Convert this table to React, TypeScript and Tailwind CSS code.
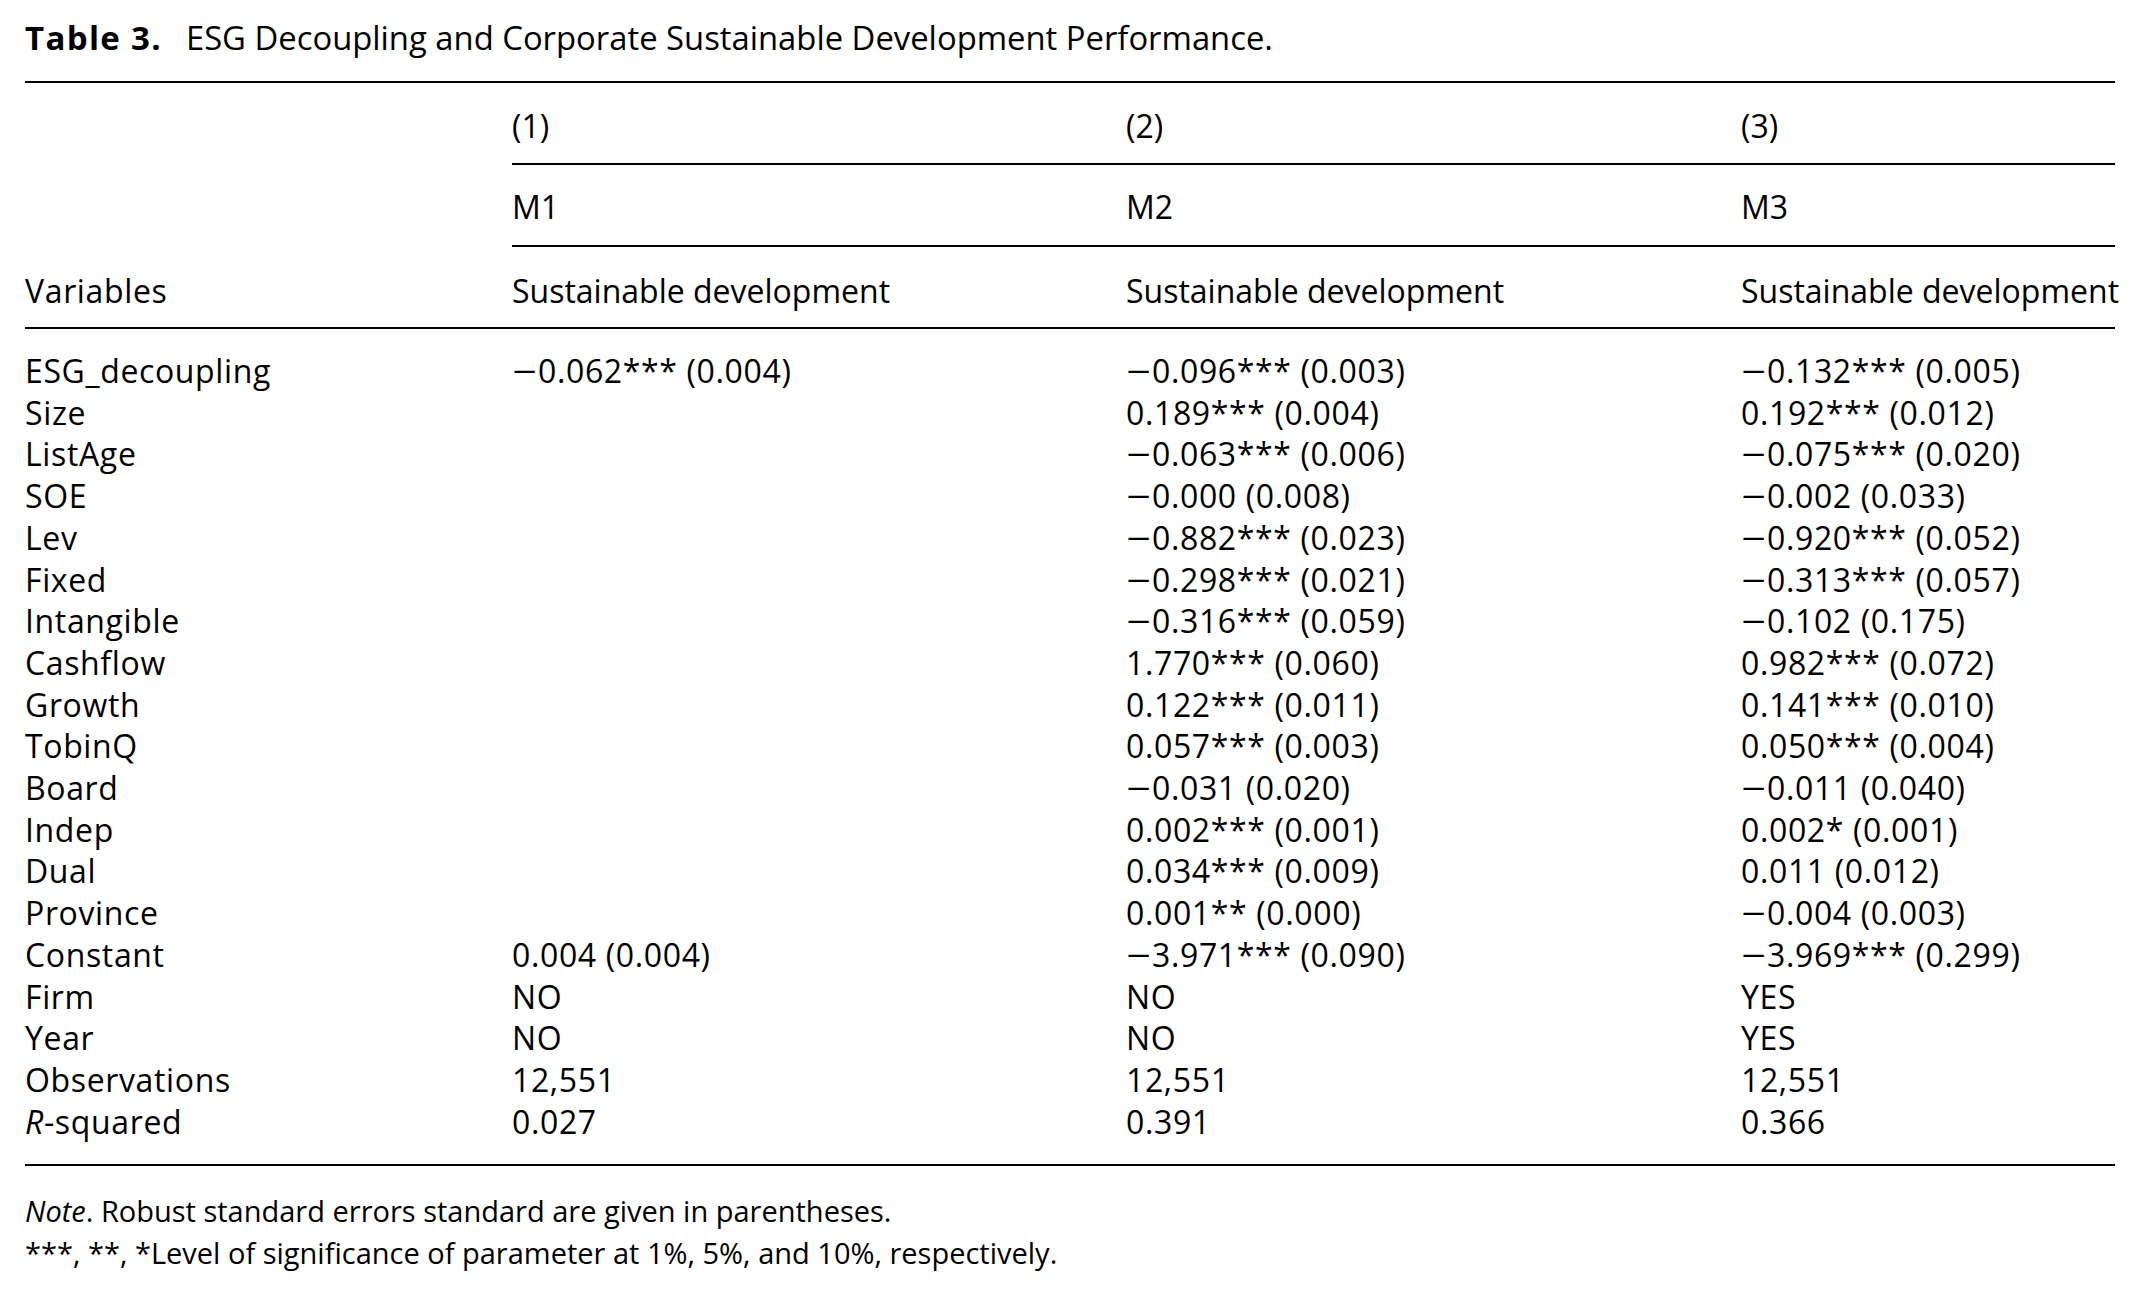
import React from 'react';

const M = '\u2212';

const rows: [React.ReactNode, string, string, string][] = [
    ['ESG_decoupling', `${M}0.062*** (0.004)`, `${M}0.096*** (0.003)`, `${M}0.132*** (0.005)`],
    ['Size', '', '0.189*** (0.004)', '0.192*** (0.012)'],
    ['ListAge', '', `${M}0.063*** (0.006)`, `${M}0.075*** (0.020)`],
    ['SOE', '', `${M}0.000 (0.008)`, `${M}0.002 (0.033)`],
    ['Lev', '', `${M}0.882*** (0.023)`, `${M}0.920*** (0.052)`],
    ['Fixed', '', `${M}0.298*** (0.021)`, `${M}0.313*** (0.057)`],
    ['Intangible', '', `${M}0.316*** (0.059)`, `${M}0.102 (0.175)`],
    ['Cashflow', '', '1.770*** (0.060)', '0.982*** (0.072)'],
    ['Growth', '', '0.122*** (0.011)', '0.141*** (0.010)'],
    ['TobinQ', '', '0.057*** (0.003)', '0.050*** (0.004)'],
    ['Board', '', `${M}0.031 (0.020)`, `${M}0.011 (0.040)`],
    ['Indep', '', '0.002*** (0.001)', '0.002* (0.001)'],
    ['Dual', '', '0.034*** (0.009)', '0.011 (0.012)'],
    ['Province', '', '0.001** (0.000)', `${M}0.004 (0.003)`],
    ['Constant', '0.004 (0.004)', `${M}3.971*** (0.090)`, `${M}3.969*** (0.299)`],
    ['Firm', 'NO', 'NO', 'YES'],
    ['Year', 'NO', 'NO', 'YES'],
    ['Observations', '12,551', '12,551', '12,551'],
    [<><i>R</i>-squared</>, '0.027', '0.391', '0.366'],
];

const cols = 'grid grid-cols-[487px_614px_615px_374px]';

// the source font draws a wider minus, so stretch ours a little
function Val({ v }: { v: string }) {
    if (v.startsWith(M)) {
        return (
            <div className="tracking-[0.02em]">
                <span className="inline-block w-[26px]">
                    <span className="inline-block origin-left scale-x-[1.35]">{M}</span>
                </span>
                {v.slice(1)}
            </div>
        );
    }
    return <div className="tracking-[0.02em]">{v}</div>;
}

export default function App() {
    return (
        <div className="min-h-screen bg-white text-black font-['Open_Sans',sans-serif]">
            <div className="w-[2090px] ml-[25px] pt-[17px]">
                <h1 className="text-[33px] leading-[42px] mb-[22px] whitespace-nowrap">
                    <span className="font-bold tracking-[0.04em]">Table 3.</span>
                    <span className="ml-[24px] text-[32.8px]">ESG Decoupling and Corporate Sustainable Development Performance.</span>
                </h1>

                <div className="border-t-2 border-black" />

                {/* header */}
                <div className={`${cols} text-[32px] leading-[42px] whitespace-nowrap`}>
                    <div className="h-[82px]" />
                    <div className="h-[82px] pt-[22px] border-b-2 border-black">(1)</div>
                    <div className="h-[82px] pt-[22px] border-b-2 border-black">(2)</div>
                    <div className="h-[82px] pt-[22px] border-b-2 border-black">(3)</div>

                    <div className="h-[82px]" />
                    <div className="h-[82px] pt-[21px] border-b-2 border-black">M1</div>
                    <div className="h-[82px] pt-[21px] border-b-2 border-black">M2</div>
                    <div className="h-[82px] pt-[21px] border-b-2 border-black">M3</div>

                    <div className="h-[82px] pt-[23px] border-b-2 border-black tracking-[0.02em]">Variables</div>
                    <div className="h-[82px] pt-[23px] border-b-2 border-black">Sustainable development</div>
                    <div className="h-[82px] pt-[23px] border-b-2 border-black">Sustainable development</div>
                    <div className="h-[82px] pt-[23px] border-b-2 border-black">Sustainable development</div>
                </div>

                {/* body */}
                <div className={`${cols} pt-[21px] pb-[22px] text-[32px] leading-[41.7px] whitespace-nowrap`}>
                    {rows.map((r, i) => (
                        <React.Fragment key={i}>
                            <div className="tracking-[0.02em]">{r[0]}</div>
                            <Val v={r[1]} />
                            <Val v={r[2]} />
                            <Val v={r[3]} />
                        </React.Fragment>
                    ))}
                </div>

                <div className="border-t-2 border-black" />

                <div className="mt-[24px] text-[29px] leading-[42px] whitespace-nowrap">
                    <p><i>Note</i>. Robust standard errors standard are given in parentheses.</p>
                    <p>***, **, *Level of significance of parameter at 1%, 5%, and 10%, respectively.</p>
                </div>
            </div>
        </div>
    );
}
